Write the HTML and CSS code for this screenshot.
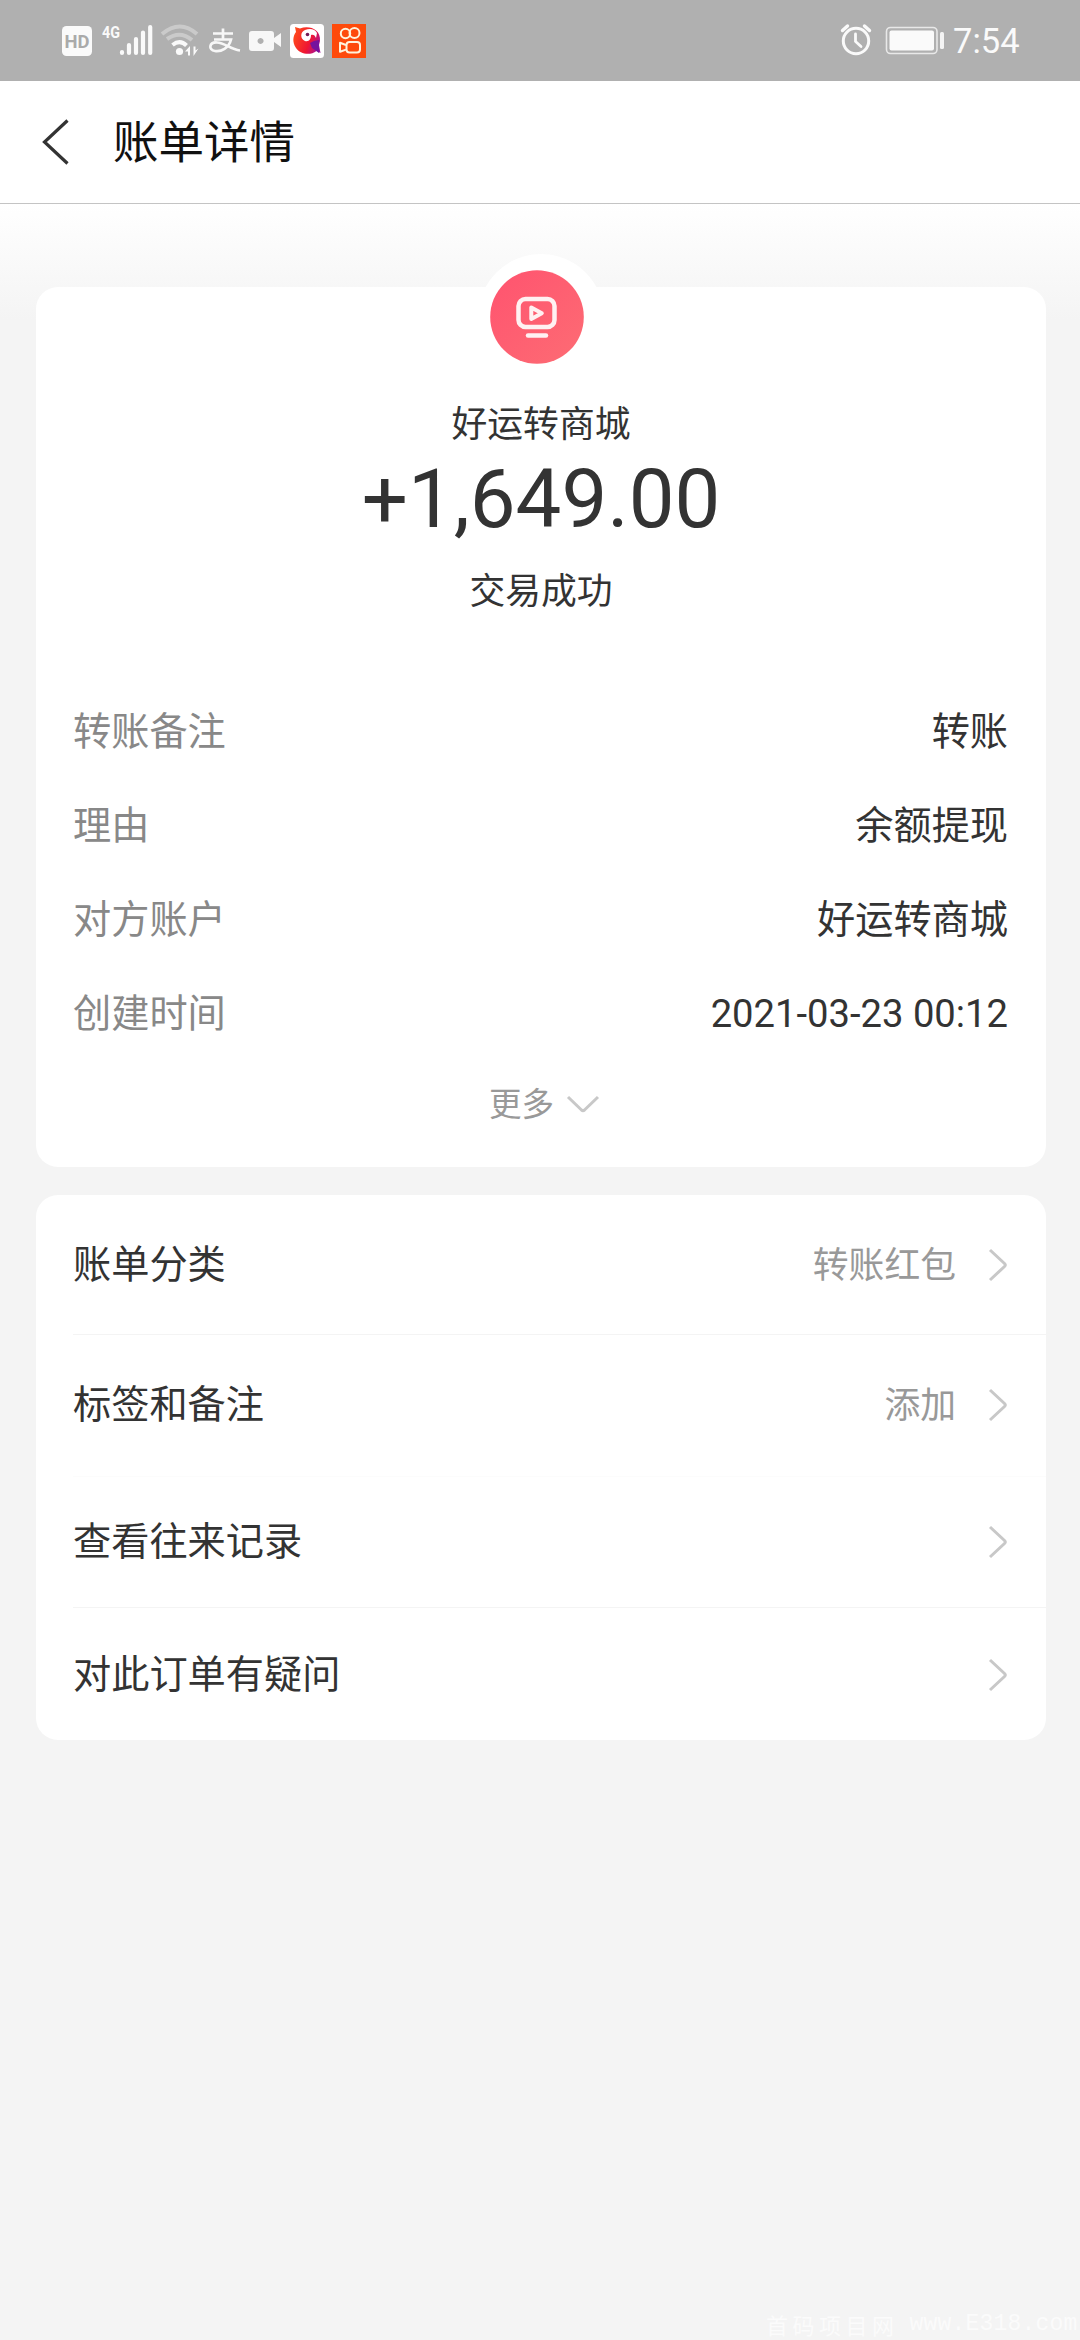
FILE: index.html
```html
<!DOCTYPE html>
<html lang="zh-CN">
<head>
<meta charset="utf-8">
<title>账单详情</title>
<link rel="stylesheet" href="styles.css">
</head>
<body>
<div class="page">
  <header class="statusbar">
    <svg class="status-icons" viewBox="0 0 330 81" width="330" height="81">
      <rect x="12" y="26" width="30" height="30" rx="4.500" fill="#fafafa"/>
      <text x="27" y="47.500" class="hd" text-anchor="middle" textLength="25" lengthAdjust="spacingAndGlyphs">HD</text>
      <text x="52" y="38" class="net" textLength="18" lengthAdjust="spacingAndGlyphs">4G</text>
      <g stroke="#fafafa" stroke-width="4.200" stroke-linecap="round">
        <path d="M72 52v1M79 45v8M86 39v14M93 32.500v20.500M100.200 27v26"/>
      </g>
      <g fill="none" stroke-width="4">
        <path d="M112 34Q130 19 147 34" stroke="#cacaca"/>
        <path d="M117 39Q130 30 142 40" stroke="#cacaca"/>
        <path d="M122.500 45Q130 39 136.500 45.500" stroke="#fafafa"/>
      </g>
      <circle cx="129.500" cy="51.500" r="3.600" fill="#fafafa"/>
      <path d="M135 51.500l5-5.500v9.500h-2v-4zM148.500 48.500l-5 7.500v-9.500h2v4z" fill="#fafafa"/>
      <g fill="none" stroke="#f7f7f7" stroke-width="2.700">
        <path d="M163 33.500h20M173 28.500v11M164 39.500h17C179 48 171 52 165 51C158 50 159 42 167 42.500C175 43 180 49 190 50.500"/>
      </g>
      <path fill-rule="evenodd" fill="#f7f7f7" d="M202 31h19q3 0 3 3v4l7-5v14l-7-5v6q0 3-3 3h-19q-3 0-3-3V34q0-3 3-3zM210.500 38a3 3 0 1 0 .1 0z"/>
      <rect x="240" y="24" width="34" height="34" rx="3.500" fill="#fff"/>
      <defs><linearGradient id="bird" x1="0" y1="0.300" x2="1" y2="0.700"><stop offset="0" stop-color="#ff4a1c"/><stop offset=".6" stop-color="#ef1633"/><stop offset="1" stop-color="#a3129b"/></linearGradient>
      <linearGradient id="logo" x1="0" y1="0" x2="1" y2="1"><stop offset="0" stop-color="#ff536f"/><stop offset="1" stop-color="#fd6c74"/></linearGradient></defs>
      <path d="M245 27l5 1.500C259 25 271 29 270 41l-1 4 1.500 8-4-2C260 56 250 54 246 48C242 42 243 36 246 32z" fill="url(#bird)"/>
      <path d="M255 41c-5-2-5-9 0-11 5-2 10-1 12 3l-1 5c-1-3-3-4-5-3 0 4-2 7-6 6z" fill="#fff"/>
      <circle cx="257.500" cy="34.500" r="1.800" fill="#741b57"/>
      <path d="M260 43l4-2 5-1v13l-4-3-3-2z" fill="#75139d"/>
      <rect x="282" y="24" width="34" height="34" fill="#fe4a0b"/>
      <g fill="none" stroke="#fff3dc" stroke-width="2">
        <circle cx="295.500" cy="33.500" r="4.700"/><circle cx="304.500" cy="33" r="5"/>
        <rect x="296.500" y="42" width="13.500" height="10.500" rx="3"/><path d="M296 45l-6-2.200v9l6-2.200" stroke-linejoin="round"/>
      </g>
    </svg>
    <div class="status-right">
      <svg viewBox="0 0 110 81" width="110" height="81">
        <g fill="none" stroke="#fafafa" stroke-linecap="round">
          <circle cx="21" cy="41" r="12.700" stroke-width="3"/><path d="M20.500 34v7.500l5.500 5" stroke-width="2.800"/><path d="M7.500 30.500l5-4.500M34.500 30.500l-5-4.500" stroke-width="3.400"/>
        </g>
        <rect x="51.500" y="27.500" width="50.500" height="26" rx="4" fill="none" stroke="#e8e8e8" stroke-width="1.600"/>
        <rect x="54.500" y="30.500" width="44.500" height="20" rx="2" fill="#fafafa"/>
        <rect x="105" y="32" width="4" height="17" rx="1.500" fill="#f4f4f4"/>
      </svg>
      <span class="clock">7:54</span>
    </div>
  </header>
  <nav class="titlebar">
    <svg width="28" height="46" viewBox="0 0 28 46"><path d="M25.500 1.500L2.500 23L25.500 44.500" fill="none" stroke="#333" stroke-width="3.200"/></svg>
    <h1>账单详情</h1>
  </nav>
  <main class="content">
    <section class="card summary">
      <div class="avatar">
        <svg width="94" height="94" viewBox="0 0 94 94">
          <circle cx="47" cy="47" r="46.800" fill="url(#logo)"/>
          <g fill="none" stroke="#fff1f2" stroke-width="4.500" stroke-linejoin="round" stroke-linecap="round">
            <rect x="28.500" y="29" width="36" height="28" rx="7"/><path d="M38 65.500h18"/>
            <path d="M41.300 37.500v11.500l10.500-5.700z" stroke-width="4"/>
          </g>
        </svg>
      </div>
      <p class="merchant">好运转商城</p>
      <p class="amount">+1,649.00</p>
      <p class="state">交易成功</p>
      <dl class="details">
        <div><dt>转账备注</dt><dd>转账</dd></div>
        <div><dt>理由</dt><dd>余额提现</dd></div>
        <div><dt>对方账户</dt><dd>好运转商城</dd></div>
        <div><dt>创建时间</dt><dd>2021-03-23 00:12</dd></div>
      </dl>
      <div class="more"><span>更多</span><svg width="34" height="20" viewBox="0 0 34 20"><path d="M2 2l13.500 13q1.500 1.300 3 0L32 2" fill="none" stroke="#c8c8c8" stroke-width="3"/></svg></div>
    </section>
    <section class="card menu">
      <div class="row category"><span>账单分类</span><em>转账红包</em><svg class="chev" viewBox="0 0 20 34"><path d="M2 2l14.500 13.500q1.500 1.500 0 3L2 32"/></svg></div>
      <div class="row tags"><span>标签和备注</span><em>添加</em><svg class="chev" viewBox="0 0 20 34"><path d="M2 2l14.500 13.500q1.500 1.500 0 3L2 32"/></svg></div>
      <div class="row history"><span>查看往来记录</span><svg class="chev" viewBox="0 0 20 34"><path d="M2 2l14.500 13.500q1.500 1.500 0 3L2 32"/></svg></div>
      <div class="row question"><span>对此订单有疑问</span><svg class="chev" viewBox="0 0 20 34"><path d="M2 2l14.500 13.500q1.500 1.500 0 3L2 32"/></svg></div>
    </section>
  </main>
  <footer class="watermark"><span>首码项目网</span><span class="site">www.E318.com</span></footer>
</div>
</body>
</html>
```
FILE: styles.css
```css
* { box-sizing: border-box; margin: 0; padding: 0; }
body { background: #f4f4f4; font-family: Roboto, "Noto Sans CJK SC", sans-serif; color: #333; }
svg { display: block; flex: none; }
.page { width: 1080px; height: 2340px; overflow: hidden; display: flex; flex-direction: column; }
.statusbar { height: 81px; flex: none; background: #b0b0b0; display: flex; justify-content: space-between; padding: 0 61px 0 50px; }
.hd { font: 700 19px Roboto, sans-serif; fill: #aaa; }
.net { font: 700 17px Roboto, sans-serif; fill: #fafafa; }
.status-right { display: flex; align-items: center; gap: 8px; }
.clock { color: #fafafa; font-size: 34.5px; line-height: 79px; padding-top: 2px; width: 66px; white-space: nowrap; }
.titlebar { height: 123px; flex: none; background: #fff; border-bottom: 1px solid #c4c4c4; display: flex; align-items: center; padding-left: 42px; gap: 43px; }
.titlebar h1 { font-size: 45.5px; line-height: 66px; font-weight: 400; color: #111; padding-top: 3px; }
.content { flex: 1; display: flex; flex-direction: column; gap: 28px; padding: 83px 34px 0 36px; background: linear-gradient(#fff, #f4f4f4 116px); }
.card { background: #fff; border-radius: 22px; flex: none; }
.summary { height: 880px; display: flex; flex-direction: column; align-items: center; }
.avatar { width: 126px; height: 126px; margin-top: -33px; padding-right: 8px; border-radius: 50%; background: #fff; display: flex; justify-content: center; align-items: center; }
.merchant { font-size: 35.8px; line-height: 52px; margin-top: 19px; }
.amount { font-size: 81.5px; line-height: 96px; }
.state { font-size: 35.8px; line-height: 52px; margin-top: 19px; }
.details { align-self: stretch; padding: 0 38px 0 37px; margin-top: 67px; }
.details div { height: 94px; display: flex; justify-content: space-between; align-items: center; font-size: 38.2px; line-height: 56px; }
.details dt { color: #888; }
.more { display: flex; align-items: center; gap: 12px; margin: 19px 0 0 7px; color: #999; font-size: 32.6px; line-height: 50px; }
.menu { height: 545px; }
.row { display: flex; align-items: center; margin-left: 37px; padding-right: 38px; font-size: 38.2px; line-height: 56px; }
.row span { flex: 1; }
.row em { font-style: normal; color: #999; font-size: 35.8px; margin-right: 32px; padding-top: 2px; }
.category { height: 140px; border-bottom: 1px solid #f4f4f4; }
.tags { height: 142px; border-bottom: 1px solid #fcfcfc; padding-bottom: 1px; }
.history { height: 131px; border-bottom: 1px solid #f4f4f4; }
.question { height: 132px; padding-top: 1px; }
.chev { width: 20px; height: 34px; fill: none; stroke: #c8c8c8; stroke-width: 3; }
.watermark { height: 32px; flex: none; background: #f4f4f4; display: flex; gap: 11px; padding-left: 766px; color: #fbfbfb; font: 22px/32px "Noto Sans CJK SC", sans-serif; white-space: nowrap; letter-spacing: 4.5px; }
.site { font-family: "Liberation Mono", monospace; font-size: 23px; letter-spacing: 0.2px; }
```
